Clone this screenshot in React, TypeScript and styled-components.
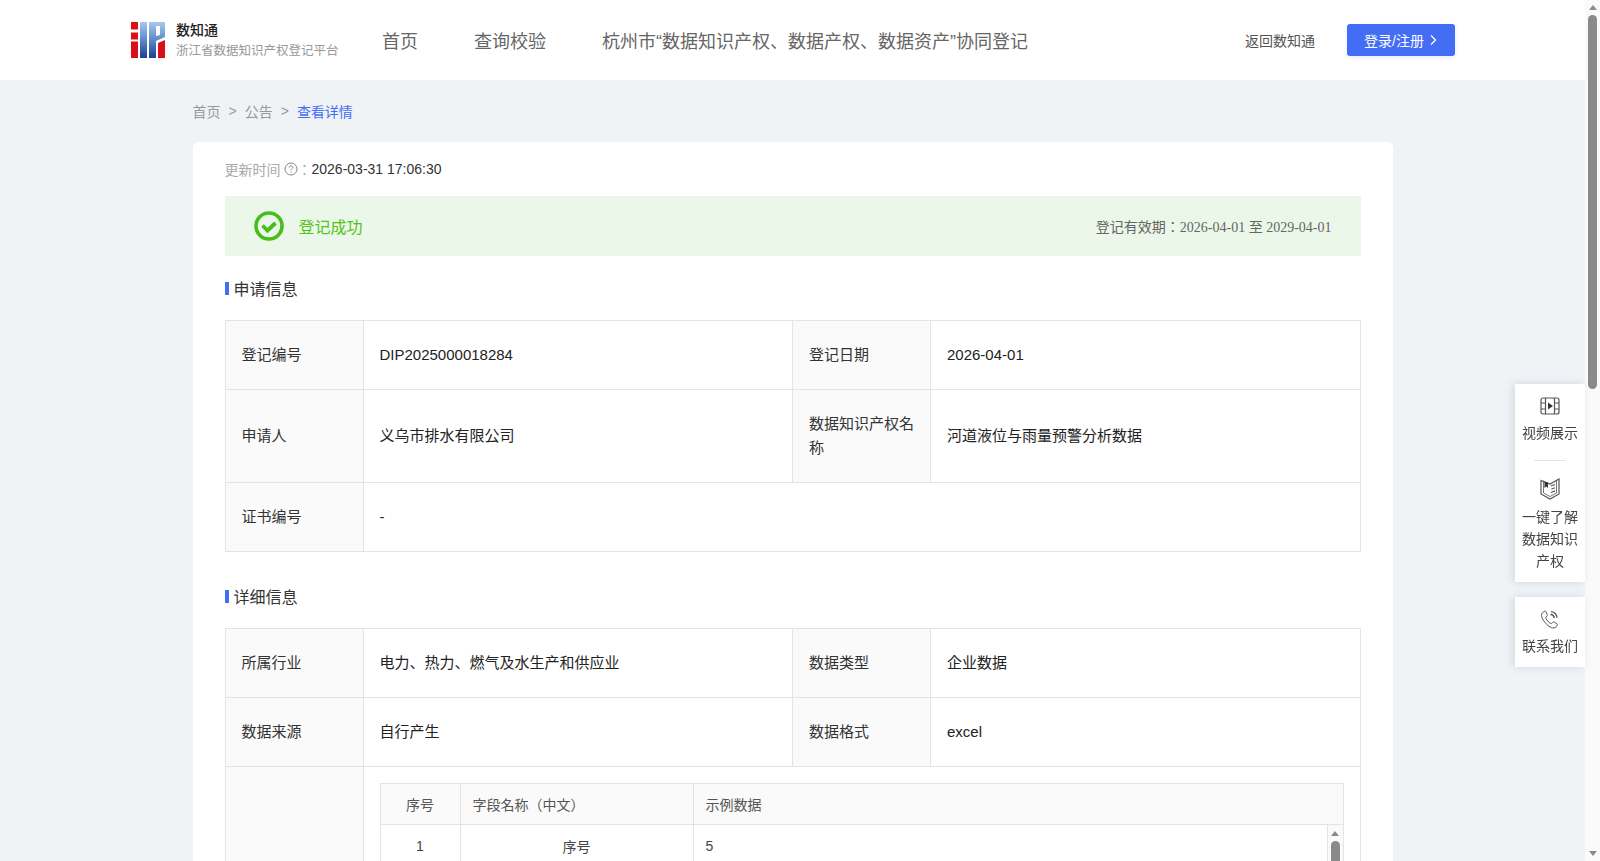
import React from "react"
import styled, { createGlobalStyle } from "styled-components"

const GlobalStyle = createGlobalStyle`
  html, body {
    margin: 0;
    height: 100%;
    overflow: hidden;
  }
  body {
    font-family: "Liberation Sans", "Noto Sans CJK JP", sans-serif;
    font-size: 14px;
    color: #333;
  }
  * {
    box-sizing: border-box;
  }
`

const Page = styled.div`
  display: flex;
  width: 100%;
  height: 100vh;
`

const Main = styled.div`
  flex: 1;
  min-width: 0;
  height: 100%;
  overflow: hidden;
  background: #eff3f6;
`

const Header = styled.header`
  display: flex;
  align-items: center;
  height: 80px;
  padding: 0 130px 0 131px;
  background: #fff;
`

const Brand = styled.div`
  display: flex;
  align-items: center;
  gap: 11px;
  width: 251px;
`

const BrandText = styled.div`
  display: flex;
  flex-direction: column;
  gap: 2px;
`

const BrandName = styled.div`
  font-size: 14px;
  line-height: 20px;
  font-weight: 500;
  color: #222;
`

const BrandSub = styled.div`
  font-size: 12.5px;
  line-height: 18px;
  color: #999;
`

const Nav = styled.nav`
  display: flex;
  gap: 56px;
  flex: 1;
  font-size: 18px;
  color: #666;
`

const BackLink = styled.a`
  color: #555;
  font-size: 14px;
  margin-right: 32px;
`

const LoginButton = styled.button`
  display: flex;
  align-items: center;
  justify-content: center;
  gap: 4px;
  width: 108px;
  height: 32px;
  border: 0;
  border-radius: 3px;
  background: #446df6;
  box-shadow: 0 2px 4px rgba(68, 109, 246, 0.12);
  color: #fff;
  font: inherit;
  font-size: 14px;
`

const Container = styled.div`
  width: 1200px;
  margin: 0 auto;
`

const Crumbs = styled.div`
  display: flex;
  align-items: center;
  gap: 8px;
  height: 62px;
  color: #999;
`

const CrumbNow = styled.span`
  color: #446df6;
`

const Card = styled.section`
  padding: 17px 32px 0;
  border-radius: 6px;
  background: #fff;
`

const UpdateRow = styled.div`
  display: flex;
  align-items: center;
  height: 20px;
  color: #aaa;
`

const UpdateValue = styled.span`
  color: #333;
`

const Hint = styled.svg`
  margin: 0 0 0 3px;
`

const Banner = styled.div`
  display: flex;
  align-items: center;
  height: 60px;
  margin-top: 17px;
  padding: 0 29px;
  background: #ebf7e8;
`

const BannerStatus = styled.span`
  flex: 1;
  margin-left: 15px;
  font-size: 16px;
  color: #52c41a;
`

const BannerDate = styled.span`
  font-family: "Liberation Serif", "Noto Sans CJK JP", serif;
  color: #666;
`

const SectionTitle = styled.h3`
  display: flex;
  align-items: center;
  gap: 5px;
  height: 24px;
  margin: 20px 0 20px;
  font-size: 16px;
  font-weight: 400;
  color: #333;

  &::before {
    content: "";
    width: 4px;
    height: 13px;
    background: #446df6;
  }
`

const InfoTable = styled.table`
  width: 100%;
  table-layout: fixed;
  border-collapse: collapse;
  margin-bottom: 32px;
`

const LabelCell = styled.th`
  width: 138px;
  padding: 0 16px;
  border: 1px solid #e4e4e4;
  background: #fafafa;
  font-size: 15px;
  font-weight: 400;
  line-height: 24px;
  text-align: left;
  color: #333;
`

const ValueCell = styled.td<{ $height?: number }>`
  height: ${(p) => p.$height ?? 69}px;
  padding: 0 16px;
  border: 1px solid #e4e4e4;
  font-size: 15px;
  line-height: 24px;
  color: #222;
`

const NestedCell = styled.td`
  padding: 16px;
  border: 1px solid #e4e4e4;
  vertical-align: top;
`

const Nested = styled.div`
  display: grid;
  grid-template-columns: 80px 233px 1fr;
  border: 1px solid #e4e4e4;
  border-bottom: 0;
`

const NestedHead = styled.div<{ $center?: boolean }>`
  display: flex;
  align-items: center;
  justify-content: ${(p) => (p.$center ? "center" : "flex-start")};
  height: 41px;
  padding: 0 12px;
  border-right: 1px solid #e4e4e4;
  border-bottom: 1px solid #e4e4e4;
  background: #fafafa;
  font-size: 14px;
  color: #555;

  &:nth-child(3) {
    border-right: 0;
  }
`

const NestedData = styled.div<{ $center?: boolean }>`
  position: relative;
  display: flex;
  align-items: center;
  justify-content: ${(p) => (p.$center ? "center" : "flex-start")};
  height: 41px;
  padding: 0 12px;
  border-right: 1px solid #e4e4e4;
  color: #444;

  &:nth-child(6) {
    border-right: 0;
  }
`

const InnerBar = styled.div`
  position: absolute;
  top: 0;
  right: 0;
  bottom: 0;
  display: flex;
  flex-direction: column;
  align-items: center;
  width: 16px;
  padding-top: 6px;
  border-left: 1px solid #e4e4e4;
  background: #fafafa;
`

const ArrowUp = styled.div`
  width: 0;
  height: 0;
  border: 4.5px solid transparent;
  border-top: 0;
  border-bottom: 5px solid #8a8a8a;
`

const ArrowDown = styled.div`
  width: 0;
  height: 0;
  border: 4.5px solid transparent;
  border-bottom: 0;
  border-top: 5px solid #8a8a8a;
`

const InnerThumb = styled.div`
  flex: none;
  width: 9px;
  height: 60px;
  margin-top: 5px;
  border-radius: 5px;
  background: #8a8a8a;
`

const ScrollTrack = styled.div`
  position: relative;
  display: flex;
  flex: none;
  flex-direction: column;
  align-items: center;
  width: 15px;
  height: 100%;
  padding: 5px 0;
  background: #fafafa;
`

const PageThumb = styled.div`
  width: 9px;
  height: 374px;
  margin: 5px 0 auto;
  border-radius: 5px;
  background: #8a8a8a;
`

const Dock = styled.aside`
  position: fixed;
  top: 384px;
  right: 15px;
  display: flex;
  flex-direction: column;
  gap: 15px;
  width: 70px;
`

const DockCard = styled.div`
  display: flex;
  flex-direction: column;
  align-items: center;
  padding: 12px 6px 10px;
  background: #fff;
  box-shadow: -2px 0 8px rgba(60, 80, 110, 0.16);
`

const DockLabel = styled.div`
  margin-top: 6px;
  font-size: 14px;
  line-height: 22px;
  text-align: center;
  color: #444;
`

const DockRule = styled.div`
  width: 32px;
  height: 1px;
  margin: 16px 0 17px;
  background: #e4e4e4;
`

const Logo = () => (
  <svg width="34" height="36" viewBox="0 0 34 36">
    <defs>
      <linearGradient id="logoBlue" x1="0" y1="0" x2="0" y2="1">
        <stop offset="0" stopColor="#a9c8ec" />
        <stop offset="0.5" stopColor="#5b8acb" />
        <stop offset="1" stopColor="#1f3f8f" />
      </linearGradient>
    </defs>
    <path d="M0 0h7v7.5H0zM0 10.5h7v7H0zM0 19.5h7V36H0z" fill="#d9101a" />
    <rect x="9" y="0" width="7" height="36" fill="url(#logoBlue)" />
    <path
      d="M18 0h16v15l-9 4v17h-7zM25 4v10l4-1V4z"
      fill="url(#logoBlue)"
      fillRule="evenodd"
    />
    <path d="M27 21l7-3v18h-7z" fill="#d9101a" />
  </svg>
)

const SuccessIcon = () => (
  <svg width="30" height="30" viewBox="0 0 30 30" fill="none">
    <circle cx="15" cy="15" r="13" stroke="#46bd1c" strokeWidth="3.6" />
    <path d="M8.5 14.5l5 5 8-7.5" stroke="#46bd1c" strokeWidth="3.8" />
  </svg>
)

const VideoIcon = () => (
  <svg width="20" height="20" viewBox="0 0 20 20" fill="none" stroke="#555" strokeWidth="1.2">
    <rect x="1" y="2" width="18" height="16" rx="2" />
    <path d="M5.5 2v16M14.5 2v16M1 7h4.5M1 13h4.5M14.5 7H19M14.5 13H19" />
    <path d="M8 6.5l5 3.5-5 3.5z" fill="#333" stroke="none" />
  </svg>
)

const BookIcon = () => (
  <svg width="20" height="22" viewBox="0 0 20 22" fill="none" stroke="#555" strokeWidth="1.2">
    <path d="M1 2.5l9 3.5 9-5v15l-9 5-9-5z" />
    <path d="M3.5 2.5v12.5l6.5 3.5 6.5-3.5V3" strokeWidth="0.8" />
    <path d="M4.5 3.5v6.5l1.8-1.4L8 10V4.5z" fill="#333" stroke="none" />
    <path d="M11 8l4-1.5M11.5 11l3.5-1.3M11 14.5l4-1.6" />
  </svg>
)

const PhoneIcon = () => (
  <svg width="20" height="20" viewBox="0 0 20 20" fill="none" stroke="#555" strokeWidth="1">
    <path d="M4.6 2.2L2.6 3.6C1 5 1.2 7.6 3 10.6c2.2 3.7 5.4 6.9 8.4 8 1.9.7 3.6.4 4.7-.8l1.1-1.4c.4-.6.3-1.2-.3-1.6l-2.6-1.7c-.6-.4-1.2-.3-1.6.2l-.8 1c-.3.3-.7.4-1.1.2-2.2-1.1-4.1-3.2-5-5.3-.2-.4-.1-.8.2-1.1l.9-.8c.5-.4.6-1 .3-1.6L5.9 2.5c-.3-.6-.9-.7-1.3-.3z" />
    <path d="M10.5 5.2c1.9.3 3.5 1.9 3.8 3.8M11 2.6c3.1.4 5.6 2.9 6 6" strokeWidth="1.4" />
  </svg>
)

const App = () => {
  return (
    <Page>
      <GlobalStyle />
      <Main>
        <Header>
          <Brand>
            <Logo />
            <BrandText>
              <BrandName>数知通</BrandName>
              <BrandSub>浙江省数据知识产权登记平台</BrandSub>
            </BrandText>
          </Brand>
          <Nav>
            <span>首页</span>
            <span>查询校验</span>
            <span>杭州市“数据知识产权、数据产权、数据资产”协同登记</span>
          </Nav>
          <BackLink>返回数知通</BackLink>
          <LoginButton>
            登录/注册
            <svg width="10" height="12" viewBox="0 0 10 12" fill="none" stroke="#fff" strokeWidth="1.3">
              <path d="M3 1.5L7.5 6 3 10.5" />
            </svg>
          </LoginButton>
        </Header>
        <Container>
          <Crumbs>
            <span>首页</span>
            <span>&gt;</span>
            <span>公告</span>
            <span>&gt;</span>
            <CrumbNow>查看详情</CrumbNow>
          </Crumbs>
          <Card>
            <UpdateRow>
              更新时间
              <Hint width="14" height="14" viewBox="0 0 14 14" fill="none" stroke="#888">
                <circle cx="7" cy="7" r="6" />
                <path d="M5.2 5.6c0-1 .8-1.7 1.8-1.7s1.8.7 1.8 1.6c0 1.3-1.8 1.3-1.8 2.9M7 9.5v1.2" />
              </Hint>
              ：<UpdateValue>2026-03-31 17:06:30</UpdateValue>
            </UpdateRow>
            <Banner>
              <SuccessIcon />
              <BannerStatus>登记成功</BannerStatus>
              <BannerDate>登记有效期：2026-04-01 至 2029-04-01</BannerDate>
            </Banner>
            <SectionTitle>申请信息</SectionTitle>
            <InfoTable>
              <tbody>
                <tr>
                  <LabelCell>登记编号</LabelCell>
                  <ValueCell>DIP2025000018284</ValueCell>
                  <LabelCell>登记日期</LabelCell>
                  <ValueCell>2026-04-01</ValueCell>
                </tr>
                <tr>
                  <LabelCell>申请人</LabelCell>
                  <ValueCell $height={93}>义乌市排水有限公司</ValueCell>
                  <LabelCell>数据知识产权名称</LabelCell>
                  <ValueCell $height={93}>河道液位与雨量预警分析数据</ValueCell>
                </tr>
                <tr>
                  <LabelCell>证书编号</LabelCell>
                  <ValueCell colSpan={3}>-</ValueCell>
                </tr>
              </tbody>
            </InfoTable>
            <SectionTitle>详细信息</SectionTitle>
            <InfoTable>
              <tbody>
                <tr>
                  <LabelCell>所属行业</LabelCell>
                  <ValueCell>电力、热力、燃气及水生产和供应业</ValueCell>
                  <LabelCell>数据类型</LabelCell>
                  <ValueCell>企业数据</ValueCell>
                </tr>
                <tr>
                  <LabelCell>数据来源</LabelCell>
                  <ValueCell>自行产生</ValueCell>
                  <LabelCell>数据格式</LabelCell>
                  <ValueCell>excel</ValueCell>
                </tr>
                <tr>
                  <LabelCell />
                  <NestedCell colSpan={3}>
                    <Nested>
                      <NestedHead $center>序号</NestedHead>
                      <NestedHead>字段名称（中文）</NestedHead>
                      <NestedHead>示例数据</NestedHead>
                      <NestedData $center>1</NestedData>
                      <NestedData $center>序号</NestedData>
                      <NestedData>
                        5
                        <InnerBar>
                          <ArrowUp />
                          <InnerThumb />
                        </InnerBar>
                      </NestedData>
                    </Nested>
                  </NestedCell>
                </tr>
              </tbody>
            </InfoTable>
          </Card>
        </Container>
      </Main>
      <ScrollTrack>
        <ArrowUp />
        <PageThumb />
        <ArrowDown />
      </ScrollTrack>
      <Dock>
        <DockCard>
          <VideoIcon />
          <DockLabel>视频展示</DockLabel>
          <DockRule />
          <BookIcon />
          <DockLabel>一键了解数据知识产权</DockLabel>
        </DockCard>
        <DockCard>
          <PhoneIcon />
          <DockLabel>联系我们</DockLabel>
        </DockCard>
      </Dock>
    </Page>
  )
}

export default App
